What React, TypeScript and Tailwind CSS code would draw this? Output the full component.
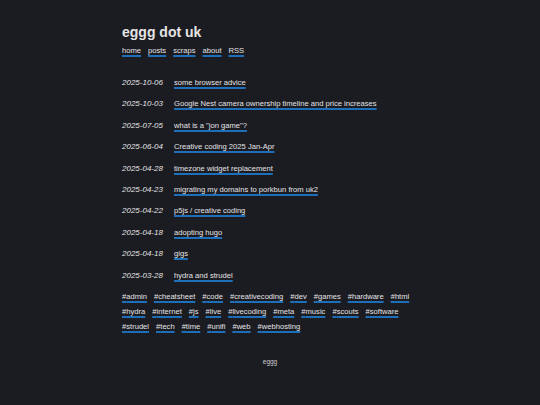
import React from 'react';

const posts = [
  { date: '2025-10-06', title: 'some browser advice' },
  { date: '2025-10-03', title: 'Google Nest camera ownership timeline and price increases' },
  { date: '2025-07-05', title: 'what is a "jon game"?' },
  { date: '2025-06-04', title: 'Creative coding 2025 Jan-Apr' },
  { date: '2025-04-28', title: 'timezone widget replacement' },
  { date: '2025-04-23', title: 'migrating my domains to porkbun from uk2' },
  { date: '2025-04-22', title: 'p5js / creative coding' },
  { date: '2025-04-18', title: 'adopting hugo' },
  { date: '2025-04-18', title: 'gigs' },
  { date: '2025-03-28', title: 'hydra and strudel' },
];

const tags = [
  'admin', 'cheatsheet', 'code', 'creativecoding', 'dev', 'games', 'hardware', 'html',
  'hydra', 'internet', 'js', 'live', 'livecoding', 'meta', 'music', 'scouts', 'software',
  'strudel', 'tech', 'time', 'unifi', 'web', 'webhosting',
];

const link = 'text-[#e4e4e4] underline decoration-[#1f6fb8] decoration-[1.5px] underline-offset-[2px]';

export default function App() {
  return (
    <div className="min-h-[405px] bg-[#1b1b22] text-[#e4e4e4] font-['Liberation_Sans',Arial,sans-serif]">
      <div className="max-w-[296px] mx-auto pt-[22px]">
        <h1 className="text-[14px] font-bold leading-[20px]">eggg dot uk</h1>

        <nav className="flex gap-[7px] text-[7.6px] mt-[3px] leading-[12px]">
          <a className={link}>home</a>
          <a className={link}>posts</a>
          <a className={link}>scraps</a>
          <a className={link}>about</a>
          <a className={link}>RSS</a>
        </nav>

        {/* Posts */}
        <ul className="mt-[20px] flex flex-col gap-[9.4px] text-[7.6px] leading-[12px]">
          {posts.map((p, i) => (
            <li key={i} className="flex">
              <span className="w-[52px] shrink-0 italic text-[8px]">{p.date}</span>
              <a className={link}>{p.title}</a>
            </li>
          ))}
        </ul>

        {/* Tags */}
        <div className="mt-[9px] flex flex-wrap gap-x-[7px] gap-y-[3px] text-[7.6px] leading-[12px]">
          {tags.map((t) => (
            <a key={t} className={link}>#{t}</a>
          ))}
        </div>

        <footer className="mt-[24px] text-center text-[6.5px] text-[#cfcfcf]">eggg</footer>
      </div>
    </div>
  );
}
